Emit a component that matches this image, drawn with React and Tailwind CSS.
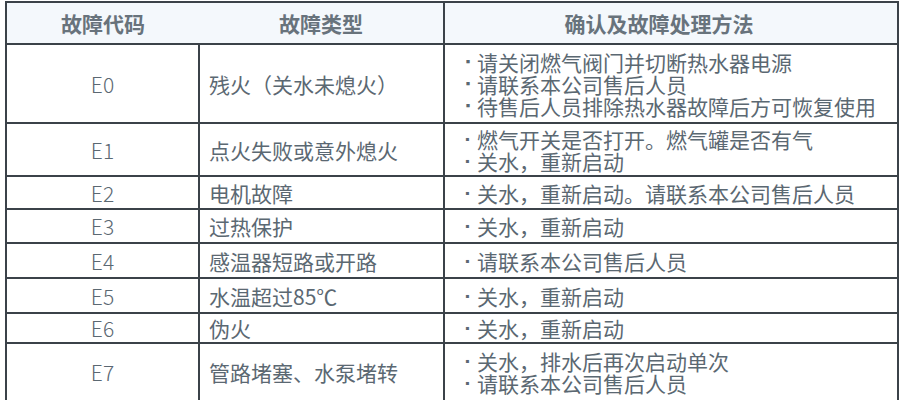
const rows = [
  { code: 'E0', type: '残火（关水未熄火）', h: 'h-[79px]', mark: '▪', items: ['请关闭燃气阀门并切断热水器电源', '请联系本公司售后人员', '待售后人员排除热水器故障后方可恢复使用'] },
  { code: 'E1', type: '点火失败或意外熄火', h: 'h-[53px]', mark: '·', items: ['燃气开关是否打开。燃气罐是否有气', '关水，重新启动'] },
  { code: 'E2', type: '电机故障', h: 'h-[33px]', mark: '·', items: ['关水，重新启动。请联系本公司售后人员'] },
  { code: 'E3', type: '过热保护', h: 'h-[34px]', mark: '·', items: ['关水，重新启动'] },
  { code: 'E4', type: '感温器短路或开路', h: 'h-[35px]', mark: '·', items: ['请联系本公司售后人员'] },
  { code: 'E5', type: '水温超过85℃', h: 'h-[35px]', mark: '·', items: ['关水，重新启动'] },
  { code: 'E6', type: '伪火', h: 'h-[30px]', mark: '·', items: ['关水，重新启动'] },
  { code: 'E7', type: '管路堵塞、水泵堵转', h: 'h-[58px]', mark: '·', items: ['关水，排水后再次启动单次', '请联系本公司售后人员'] },
]

export default function App() {
  return (
    <div className="w-[899px] h-[400px] overflow-hidden bg-white pl-[5px] pt-[1px] font-['Noto_Sans_CJK_SC','Noto_Sans',sans-serif] text-[#5b6872]">
      <table className="w-[894px] border-collapse table-fixed">
        <colgroup>
          <col className="w-[193px]" />
          <col className="w-[245px]" />
          <col />
        </colgroup>
        <thead>
          <tr className="h-[42px] bg-[#f4f8fc] text-[21px] leading-[24px] font-bold text-[#68737c]">
            <th className="border-2 border-r-0 border-[#3b4249] text-center">故障代码</th>
            <th className="border-y-2 border-[#3b4249] text-center">故障类型</th>
            <th className="border-2 border-[#3b4249] text-center pr-6">确认及故障处理方法</th>
          </tr>
        </thead>
        <tbody>
          {rows.map((r) => (
            <tr key={r.code} className={`${r.h} text-[21px] leading-[22px]`}>
              <td className="border-2 border-[#3b4249] text-center font-light">{r.code}</td>
              <td className="border-2 border-[#3b4249] pl-[9px]">{r.type}</td>
              <td className="border-2 border-[#3b4249] pl-[14px]">
                {r.items.map((t) => (
                  <div key={t} className="flex items-center">
                    {r.mark === '▪' ? (
                      <span className="w-[18px] text-center text-[12px]">▪</span>
                    ) : (
                      <span className="w-[18px] flex justify-center font-['Liberation_Sans',sans-serif] font-bold">·</span>
                    )}
                    <span>{t}</span>
                  </div>
                ))}
              </td>
            </tr>
          ))}
        </tbody>
      </table>
    </div>
  )
}
